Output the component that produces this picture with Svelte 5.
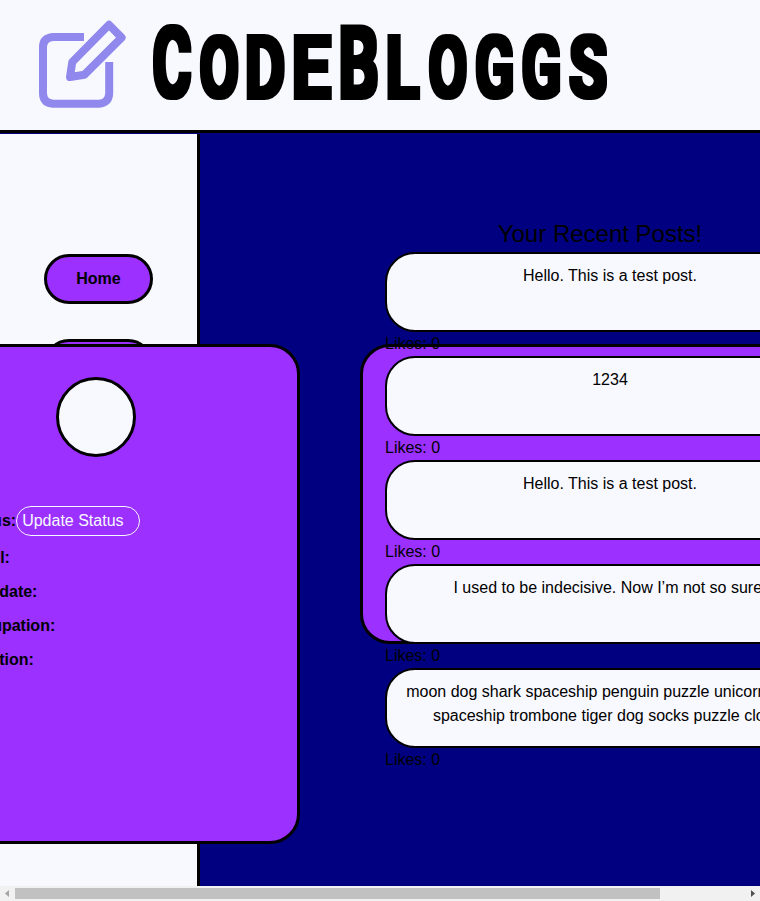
<script>
  const labels = ['Email:', 'Birthdate:', 'Occupation:', 'Location:'];
  const posts = [
    ['Hello. This is a test post.'],
    ['1234'],
    ['Hello. This is a test post.'],
    ['I used to be indecisive. Now I’m not so sure.'],
    [
      'moon dog shark spaceship penguin puzzle unicorn socks',
      'spaceship trombone tiger dog socks puzzle clown'
    ]
  ];
  // letter, left edge, drawn width, glyph left and width in font units, font size, baseline
  const letters = [
    ['C', 153, 38, 87, 1172, 98, 97],
    ['O', 200, 38, 87, 1220, 84.5, 97],
    ['D', 246.3, 38, 117, 1115, 87, 98],
    ['E', 293.3, 37.7, 117, 967, 87, 98],
    ['B', 340, 38, 117, 1103, 101, 98],
    ['L', 387, 32.7, 117, 937, 87, 98],
    ['O', 429, 37.5, 87, 1220, 84.5, 97],
    ['G', 475.5, 37.5, 90, 1190, 84.5, 97],
    ['G', 522, 38, 90, 1190, 84.5, 97],
    ['S', 569, 38, 66, 1120, 84.5, 97]
  ];
  const spread = 2;
  const glyphs = letters.map(([char, left, width, inkLeft, inkWidth, size, base]) => {
    const scale = (width - spread * 2) / ((inkWidth / 2048) * size);
    const x = left + spread - (inkLeft / 2048) * size * scale;
    return { char, size, transform: `translate(${x} ${base}) scale(${scale} 1)` };
  });
</script>

<div class="window">
  <div class="page">
    <header>
      <svg width="640" height="130" viewBox="0 0 640 130" role="img" aria-label="CodeBloggs">
        <filter id="heavy" filterUnits="userSpaceOnUse" x="140" y="0" width="490" height="130">
          <feMorphology operator="dilate" radius={spread} />
        </filter>
        <g fill="none" stroke="#9088ec" stroke-width="8" stroke-linejoin="round">
          <path d="M84 37H53Q43 38 43 47V93Q43 103 53 103.7H99Q109 103 109.2 93V62" />
          <path d="M109 24.8L121.6 37.6L84.5 74.7L70 77L72.3 62Z" />
        </g>
        <g filter="url(#heavy)">
          {#each glyphs as g}
            <text class="brand" font-size={g.size} transform={g.transform}>{g.char}</text>
          {/each}
        </g>
      </svg>
    </header>
    <div class="body">
      <nav>
        <button>Home</button>
        <button></button>
      </nav>
      <main>
        <section class="posts">
          <h2>Your Recent Posts!</h2>
          {#each posts as lines}
            <article class:long={lines.length > 1}>
              {#each lines as line}<p>{line}</p>{/each}
            </article>
            <div class="likes">Likes: 0</div>
          {/each}
        </section>
      </main>
      <section class="profile">
        <div class="avatar"></div>
        <div class="status"><b>Status:</b><input placeholder="Update Status" /></div>
        {#each labels as label}<div class="field">{label}</div>{/each}
      </section>
      <div class="panel"></div>
    </div>
  </div>
  <div class="scroll">
    <svg width="15" height="15"><path d="M9 4V11L5 7.5Z" fill="#a3a3a3" /></svg>
    <div class="thumb"></div>
    <svg width="15" height="15"><path d="M6 4V11L10 7.5Z" fill="#505050" /></svg>
  </div>
</div>

<style>
  :global(body) { margin: 0; overflow: hidden; }
  .window {
    width: 760px;
    height: 901px;
    overflow: hidden;
    font: 16px/24px "Liberation Sans", Arial, sans-serif;
    color: #000;
  }
  .window * { box-sizing: border-box; }
  .page {
    height: 886px;
    overflow: hidden;
    background: #000080;
    display: flex;
    flex-direction: column;
  }
  header {
    height: 133px;
    flex: none;
    background: #f8f8ff;
    border-bottom: 3px solid #000;
  }
  header svg { display: block; }
  .brand {
    font-family: Roboto, sans-serif;
    font-weight: 700;
  }
  .body {
    position: relative;
    display: flex;
    flex: 1;
    margin-top: 1px;
  }
  nav {
    width: 200px;
    flex: none;
    background: #f8f8ff;
    border-right: 3px solid #000;
    padding: 120px 0 0 44px;
    display: flex;
    flex-direction: column;
    gap: 35px;
  }
  button {
    width: 109px;
    height: 50px;
    padding: 0;
    border: 3px solid #000;
    border-radius: 25px;
    background: #9b30ff;
    color: #000;
    font: bold 16px/24px "Liberation Sans", Arial, sans-serif;
  }
  main { padding: 82px 0 0 185px; }
  .posts {
    position: relative;
    z-index: 2;
    width: 450px;
  }
  h2 {
    margin: 0;
    width: 430px;
    text-align: center;
    font-size: 24px;
    line-height: 36px;
    font-weight: 400;
  }
  article {
    height: 80px;
    padding: 10px;
    border: 2px solid #000;
    border-radius: 30px;
    background: #f8f8ff;
    text-align: center;
  }
  .long { padding-right: 12px; }
  p { margin: 0; white-space: nowrap; }
  .likes { height: 24px; }
  .profile {
    position: absolute;
    z-index: 1;
    left: -108px;
    top: 210px;
    width: 408px;
    height: 500px;
    padding: 30px 0 0 66.9px;
    border: 3px solid #000;
    border-radius: 30px;
    background: #9b30ff;
    font-weight: bold;
  }
  .avatar {
    width: 80px;
    height: 80px;
    margin: 0 0 49px 94.1px;
    border: 3px solid #000;
    border-radius: 50%;
    background: #f8f8ff;
  }
  .status {
    display: flex;
    align-items: center;
    height: 30px;
    margin-bottom: 10px;
  }
  input {
    width: 124.2px;
    height: 30px;
    padding: 0 5px;
    border: 1px solid #f8f8ff;
    border-radius: 15px;
    background: transparent;
    font: 16px "Liberation Sans", Arial, sans-serif;
  }
  input::placeholder { color: #f8f8ff; opacity: 1; }
  .field { height: 24px; margin-bottom: 10px; }
  .panel {
    position: absolute;
    left: 360px;
    top: 210px;
    width: 500px;
    height: 300px;
    border: 3px solid #000;
    border-radius: 30px;
    background: #9b30ff;
  }
  .scroll {
    height: 15px;
    display: flex;
    background: #f1f1f1;
  }
  .scroll svg { display: block; flex: none; }
  .thumb {
    width: 645px;
    height: 11px;
    margin: 2px 85px 0 0;
    flex: none;
    background: #c1c1c1;
  }
</style>
